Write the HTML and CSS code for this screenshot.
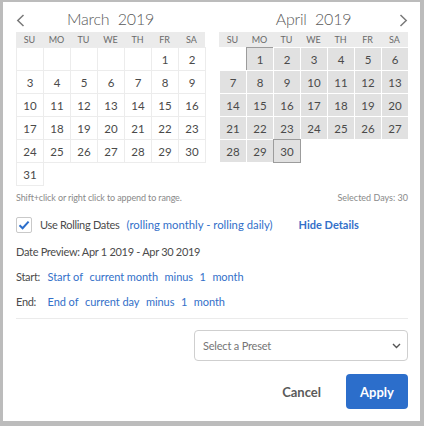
FILE: index.html
```html
<!DOCTYPE html>
<html>
<head>
<meta charset="utf-8">
<link rel="stylesheet" href="styles.css">
</head>
<body>
<div class="dialog">
  <div class="cals">
    <div class="cal">
      <div class="cal-head">
        <svg class="nav prev" width="9" height="13" viewBox="0 0 9 13"><path d="M7.5 1 L1.8 6.5 L7.5 12" fill="none" stroke="#7a7a7a" stroke-width="1.5"/></svg>
        <span class="title">March&nbsp;&nbsp;2019</span>
      </div>
      <div class="dow"><span>SU</span><span>MO</span><span>TU</span><span>WE</span><span>TH</span><span>FR</span><span>SA</span></div>
      <div class="grid march">
        <span class="c"></span><span class="c"></span><span class="c"></span><span class="c"></span><span class="c"></span><span class="c">1</span><span class="c">2</span>
        <span class="c">3</span><span class="c">4</span><span class="c">5</span><span class="c">6</span><span class="c">7</span><span class="c">8</span><span class="c">9</span>
        <span class="c">10</span><span class="c">11</span><span class="c">12</span><span class="c">13</span><span class="c">14</span><span class="c">15</span><span class="c">16</span>
        <span class="c">17</span><span class="c">18</span><span class="c">19</span><span class="c">20</span><span class="c">21</span><span class="c">22</span><span class="c">23</span>
        <span class="c">24</span><span class="c">25</span><span class="c">26</span><span class="c">27</span><span class="c">28</span><span class="c">29</span><span class="c">30</span>
        <span class="c">31</span>
      </div>
    </div>
    <div class="cal">
      <div class="cal-head">
        <span class="title">April&nbsp;&nbsp;2019</span>
        <svg class="nav next" width="9" height="13" viewBox="0 0 9 13"><path d="M1.5 1 L7.2 6.5 L1.5 12" fill="none" stroke="#7a7a7a" stroke-width="1.5"/></svg>
      </div>
      <div class="dow"><span>SU</span><span>MO</span><span>TU</span><span>WE</span><span>TH</span><span>FR</span><span>SA</span></div>
      <div class="grid april">
        <span class="e"></span><span class="d sel">1</span><span class="d">2</span><span class="d">3</span><span class="d">4</span><span class="d">5</span><span class="d">6</span>
        <span class="d">7</span><span class="d">8</span><span class="d">9</span><span class="d">10</span><span class="d">11</span><span class="d">12</span><span class="d">13</span>
        <span class="d">14</span><span class="d">15</span><span class="d">16</span><span class="d">17</span><span class="d">18</span><span class="d">19</span><span class="d">20</span>
        <span class="d">21</span><span class="d">22</span><span class="d">23</span><span class="d">24</span><span class="d">25</span><span class="d">26</span><span class="d">27</span>
        <span class="d">28</span><span class="d">29</span><span class="d sel">30</span>
      </div>
    </div>
  </div>

  <div class="hint-row">
    <span>Shift+click or right click to append to range.</span>
    <span>Selected Days: 30</span>
  </div>

  <div class="check-row">
    <span class="checkbox"><svg width="16" height="16" viewBox="0 0 16 16"><path d="M3.5 8.2 L6.6 11.2 L12.6 4.6" fill="none" stroke="#2c6ecb" stroke-width="2"/></svg></span>
    <span class="label">Use Rolling Dates</span>
    <span class="link rolling">(rolling monthly - rolling daily)</span>
    <span class="link strong hide">Hide Details</span>
  </div>

  <div class="line preview">Date Preview: Apr 1 2019 - Apr 30 2019</div>
  <div class="line"><span class="lbl">Start:</span><span class="link">Start of</span><span class="link">current month</span><span class="link">minus</span><span class="link">1</span><span class="link">month</span></div>
  <div class="line"><span class="lbl">End:</span><span class="link">End of</span><span class="link">current day</span><span class="link">minus</span><span class="link">1</span><span class="link">month</span></div>

  <div class="divider"></div>

  <div class="preset-row">
    <div class="select">
      <span>Select a Preset</span>
      <svg width="9" height="6" viewBox="0 0 9 6"><path d="M1 1 L4.5 4.5 L8 1" fill="none" stroke="#555" stroke-width="1.4"/></svg>
    </div>
  </div>

  <div class="actions">
    <span class="cancel">Cancel</span>
    <span class="apply">Apply</span>
  </div>
</div>
</body>
</html>
```

FILE: styles.css
```css
html, body {
  margin: 0;
  padding: 0;
}
body {
  width: 424px;
  height: 426px;
  background: #bcbcbc;
  font-family: Lato, "Open Sans", sans-serif;
  color: #4b4b4b;
  overflow: hidden;
}
.dialog {
  box-sizing: border-box;
  margin: 2px 0 0 3px;
  width: 417px;
  height: 419px;
  background: #fff;
  padding: 0 12px 0 13px;
  display: flex;
  flex-direction: column;
}
.cals {
  display: flex;
  gap: 14px;
}
.cal {
  width: 189px;
}
.cal-head {
  height: 30px;
  box-sizing: border-box;
  padding-top: 3px;
  display: flex;
  align-items: center;
  justify-content: center;
  position: relative;
}
.title {
  font-size: 16px;
  font-weight: 300;
  color: #5a5a5a;
  letter-spacing: -0.2px;
}
.nav {
  position: absolute;
  top: 12px;
}
.prev { left: 0; }
.next { right: 0; }
.dow {
  height: 15px;
  background: #ebebeb;
  display: grid;
  grid-template-columns: repeat(7, 27px);
  align-items: center;
  font-size: 9px;
  color: #6a6a6a;
}
.dow span {
  text-align: center;
}
.grid {
  display: grid;
  grid-template-columns: repeat(7, 27px);
  grid-auto-rows: 23px;
  font-size: 11.5px;
  color: #4a4a4a;
}
.march .c {
  border: 1px solid #ececec;
  margin: 0 -1px -1px 0;
  display: flex;
  align-items: center;
  justify-content: center;
}
.april .d,
.april .e {
  border: 1px solid #fff;
  margin: 0 -1px -1px 0;
  display: flex;
  align-items: center;
  justify-content: center;
  background: #e1e1e1;
}
.april .e {
  background: #fff;
}
.april .sel {
  border-color: #9c9c9c;
}
.hint-row {
  margin-top: 5px;
  height: 14px;
  display: flex;
  justify-content: space-between;
  align-items: center;
  font-size: 9px;
  color: #8a8a8a;
}
.hint-row span:first-child {
  letter-spacing: -0.12px;
}
.check-row {
  margin-top: 12px;
  height: 17px;
  display: flex;
  align-items: center;
  font-size: 11px;
}
.checkbox {
  box-sizing: border-box;
  width: 16px;
  height: 16px;
  border: 1px solid #c9c9c9;
  border-radius: 2px;
  display: flex;
  align-items: center;
  justify-content: center;
  margin-right: 8px;
}
.checkbox svg {
  flex: none;
}
.label {
  color: #4b4b4b;
  letter-spacing: -0.3px;
}
.link {
  color: #3370c9;
}
.strong {
  font-weight: 700;
}
.rolling {
  margin-left: 7px;
  font-size: 11.3px;
}
.hide {
  margin-left: 26px;
}
.line {
  font-size: 11px;
  height: 14px;
  display: flex;
  align-items: center;
  gap: 6.5px;
}
.preview {
  margin-top: 11px;
  letter-spacing: -0.3px;
}
.line + .line {
  margin-top: 11px;
}
.lbl {
  width: 25px;
  letter-spacing: -0.3px;
}
.line .link {
  letter-spacing: -0.05px;
}
.divider {
  margin-top: 10px;
  height: 1px;
  background: #ebebeb;
}
.preset-row {
  margin-top: 11px;
  display: flex;
  justify-content: flex-end;
}
.select {
  box-sizing: border-box;
  width: 214px;
  height: 31px;
  border: 1px solid #cfcfcf;
  border-radius: 4px;
  display: flex;
  align-items: center;
  justify-content: space-between;
  padding: 0 6px 0 8px;
  font-size: 11px;
  letter-spacing: -0.2px;
  color: #757575;
}
.actions {
  margin-top: 13px;
  display: flex;
  justify-content: flex-end;
  align-items: center;
}
.cancel {
  font-size: 13px;
  font-weight: 700;
  color: #5a5a5a;
  margin-right: 25px;
}
.apply {
  box-sizing: border-box;
  width: 62px;
  height: 35px;
  border-radius: 4px;
  background: #2c6ecb;
  color: #fff;
  font-size: 13px;
  font-weight: 700;
  display: flex;
  align-items: center;
  justify-content: center;
}
```
